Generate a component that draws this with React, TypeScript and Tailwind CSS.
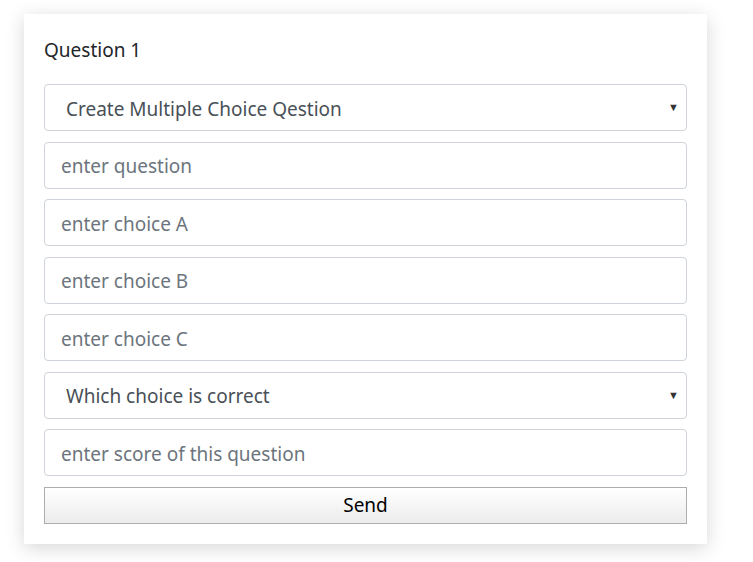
import React from "react";

const fields = [
    {kind: "select", text: "Create Multiple Choice Qestion"},
    {kind: "input", text: "enter question"},
    {kind: "input", text: "enter choice A"},
    {kind: "input", text: "enter choice B"},
    {kind: "input", text: "enter choice C"},
    {kind: "select", text: "Which choice is correct"},
    {kind: "input", text: "enter score of this question"},
];

export default function App() {
    return (
        <div className="w-[753px] h-[562px] bg-white pl-6 pt-[14px]" style={{fontFamily: '"Noto Sans", "Open Sans", sans-serif'}}>
            <div className="w-[683px] h-[530px] bg-white shadow-[0_4px_18px_rgba(0,0,0,0.16)] px-5 pt-[22px]">
                <div className="text-[19px] leading-7 text-[#212529] mb-5">Question 1</div>
                <div className="flex flex-col gap-[10.5px]">
                    {fields.map((f, i) =>
                        f.kind === "select" ? (
                            <div
                                key={i}
                                className="h-[47px] flex items-center justify-between border border-[#ced4da] rounded pl-[21px] pr-[7px] pt-[3px] text-[19px] text-[#495057]"
                            >
                                <span>{f.text}</span>
                                <span className="text-[11px] text-[#333] -mt-[3px]">▼</span>
                            </div>
                        ) : (
                            <input
                                key={i}
                                placeholder={f.text}
                                className="h-[47px] w-full border border-[#ced4da] rounded pl-4 pr-4 pt-[2px] text-[19px] text-[#495057] placeholder:text-[#6c757d] outline-none"
                            />
                        )
                    )}
                    <button className="h-[37px] w-full border border-[#adadad] bg-gradient-to-b from-white to-[#ececec] pt-[1px] text-[19px] text-black">
                        Send
                    </button>
                </div>
            </div>
        </div>
    );
}
